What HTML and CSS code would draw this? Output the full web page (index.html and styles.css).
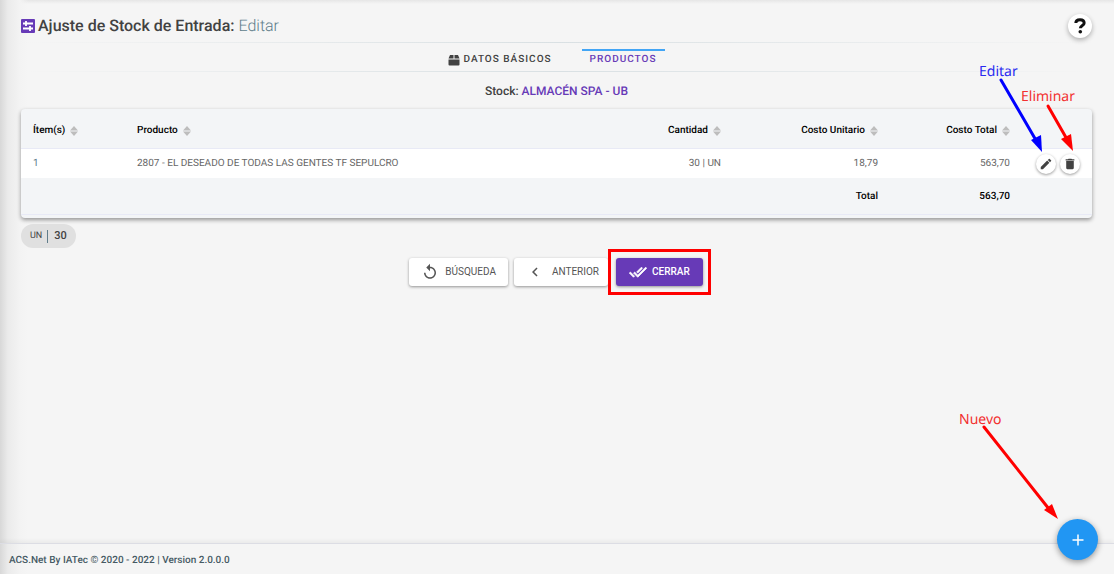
FILE: index.html
```html
<!DOCTYPE html>
<html lang="es">
<head>
<meta charset="utf-8">
<meta name="viewport" content="width=device-width, initial-scale=1">
<title>Ajuste de Stock de Entrada</title>
<link rel="stylesheet" href="styles.css">
</head>
<body>
<svg class="symbols" aria-hidden="true">
  <symbol id="sort" viewBox="0 0 8 10"><path d="M4 0 8 4.500H0zM4 10 0 5.500H8z"/></symbol>
</svg>
<main class="page">
  <header class="top">
    <h1 class="title">
      <svg class="title-icon" viewBox="0 0 14 14" aria-hidden="true"><rect width="14" height="14" rx="1" fill="#673ab7"/><path d="M2 4.500H12M2 9.500H12M5 2V7M9 7V12" stroke="#fff" stroke-width="1.800"/></svg>
      <span>Ajuste de Stock de Entrada: <span class="mode">Editar</span></span>
    </h1>
    <button class="help" aria-label="Ayuda"><svg viewBox="0 0 12 16" aria-hidden="true"><path d="M1.800 5C1.800 2.900 3.500 1.700 6 1.700S10.200 3 10.200 5C10.200 7.500 6.300 7.400 6.300 10.300" fill="none" stroke="#111" stroke-width="2.900"/><circle cx="6.300" cy="13.700" r="1.800" fill="#111"/></svg></button>
  </header>
  <nav class="tabs">
    <a class="tab" href="#datos"><svg class="box" viewBox="0 0 12 12" aria-hidden="true"><path d="M2 1H5.500V4.500H.5zM6.500 1H10L11.500 4.500H6.500zM.5 5.500H11.500V10.500Q11.500 11.500 10.500 11.500H1.500Q.5 11.500 .5 10.500z" fill="#424242"/></svg>DATOS BÁSICOS</a>
    <a class="tab active" href="#productos" aria-current="page">PRODUCTOS</a>
  </nav>
  <p class="stock">Stock: <strong>ALMACÉN SPA - UB</strong></p>
  <div class="card">
    <table class="grid">
      <colgroup><col class="c-item"><col><col class="c-qty"><col class="c-unit"><col class="c-total"><col class="c-act"></colgroup>
      <thead>
        <tr>
          <th>Ítem(s)<svg class="sort"><use href="#sort"/></svg></th>
          <th>Producto<svg class="sort"><use href="#sort"/></svg></th>
          <th class="num">Cantidad<svg class="sort"><use href="#sort"/></svg></th>
          <th class="num">Costo Unitario<svg class="sort"><use href="#sort"/></svg></th>
          <th class="num">Costo Total<svg class="sort"><use href="#sort"/></svg></th>
          <th></th>
        </tr>
      </thead>
      <tbody>
        <tr>
          <td class="item">1</td>
          <td>2807 - EL DESEADO DE TODAS LAS GENTES TF SEPULCRO</td>
          <td class="num">30 | UN</td>
          <td class="num">18,79</td>
          <td class="num">563,70</td>
          <td class="act"><div class="actions">
            <button class="round" aria-label="Editar"><svg viewBox="0 0 24 24" aria-hidden="true"><path d="M3 17.250V21h3.750L17.810 9.940l-3.750-3.750L3 17.250zM20.710 7.040a1 1 0 0 0 0-1.410l-2.340-2.340a1 1 0 0 0-1.410 0l-1.830 1.830 3.750 3.750 1.830-1.830z"/></svg></button>
            <button class="round" aria-label="Eliminar"><svg viewBox="0 0 24 24" aria-hidden="true"><path d="M5.500 19c0 1.100.9 2 2 2h9c1.100 0 2-.9 2-2V7h-13v12zM19.500 4h-4l-1-1h-5l-1 1h-4v2h15V4z"/></svg></button>
          </div></td>
        </tr>
      </tbody>
      <tfoot>
        <tr><td></td><td></td><td></td><td class="num">Total</td><td class="num">563,70</td><td></td></tr>
      </tfoot>
    </table>
  </div>
  <div class="chip"><span class="unit">UN</span><strong>30</strong></div>
  <div class="buttons">
    <button class="btn search"><svg viewBox="0 0 24 24" aria-hidden="true"><path d="M12 5V1L7 6l5 5V7c3.310 0 6 2.690 6 6s-2.690 6-6 6-6-2.690-6-6H4c0 4.420 3.580 8 8 8s8-3.580 8-8-3.580-8-8-8z"/></svg>BÚSQUEDA</button>
    <button class="btn prev"><svg viewBox="0 0 24 24" aria-hidden="true"><path d="M15.410 7.410 14 6l-6 6 6 6 1.410-1.410L10.830 12z"/></svg>ANTERIOR</button>
    <div class="marked"><button class="btn primary"><svg viewBox="0 0 24 24" aria-hidden="true"><path stroke="#fff" d="m18 7-1.410-1.410-6.340 6.340 1.410 1.410L18 7zm4.240-1.410L11.660 16.170 7.480 12l-1.410 1.410L11.660 19l12-12-1.420-1.410zM.41 13.410 6 19l1.410-1.410L1.830 12 .41 13.410z"/></svg>CERRAR</button></div>
  </div>
</main>
<footer class="footer">ACS.Net By IATec © 2020 - 2022 | Version 2.0.0.0</footer>
<button class="fab" aria-label="Nuevo"><svg viewBox="0 0 12 12" aria-hidden="true"><path d="M6 .5V11.500M.5 6H11.500" stroke="#fff" stroke-width="1.500"/></svg></button>
<svg class="notes notes-top" viewBox="0 0 174 230">
  <text x="39" y="76" fill="#2a2af0">Editar</text>
  <text x="81" y="101" fill="#f23030">Eliminar</text>
  <path d="M61 80 97 142" stroke="#00f" stroke-width="3" stroke-linecap="round"/><path d="M102 152 91 140 101 135z" fill="#00f"/>
  <path d="M108 106 128 141" stroke="red" stroke-width="3" stroke-linecap="round"/><path d="M133 151 121 139 131 134z" fill="red"/>
</svg>
<svg class="notes notes-bottom" viewBox="0 0 174 174">
  <text x="19" y="24" fill="#f23030">Nuevo</text>
  <path d="M44 27 109 109" stroke="red" stroke-width="3" stroke-linecap="round"/><path d="M118 119 104 110 112 104z" fill="red"/>
</svg>
</body>
</html>
```
FILE: styles.css
```css
* { box-sizing: border-box; }
body {
  margin: 0;
  min-height: 100vh;
  position: relative;
  display: flex;
  flex-direction: column;
  font-family: Roboto, "Liberation Sans", sans-serif;
  font-size: 10px;
  line-height: 16px;
  text-rendering: geometricPrecision;
  color: #424242;
  background: linear-gradient(90deg, #d8d8d8 0, #ebebeb 8px, #f3f3f3 20px, transparent 28px), linear-gradient(#e6e6e6 0, #f5f5f5 4px);
}
button { font: inherit; border: 0; padding: 0; cursor: pointer; }
.symbols { position: absolute; width: 0; height: 0; }
.page { flex: 1; padding: 0 22px 0 21px; }
.top {
  display: flex;
  justify-content: space-between;
  align-items: center;
  height: 42px;
  padding-top: 9px;
}
.title {
  display: flex;
  align-items: center;
  gap: 3px;
  margin: 0;
  font-size: 16px;
  line-height: 20px;
  font-weight: 500;
}
.title-icon { width: 14px; height: 14px; }
.mode { font-weight: 300; color: #607d8b; }
.help {
  width: 24px;
  height: 24px;
  display: grid;
  place-items: center;
  border-radius: 50%;
  background: #fff;
  box-shadow: 0 2px 5px rgba(0, 0, 0, .3);
}
.help svg { width: 12px; height: 16px; }
.tabs {
  display: flex;
  justify-content: center;
  gap: 22px;
  height: 30px;
  padding: 6px 8px 0 0;
  border: solid transparent;
  border-width: 1px 0;
  border-image: linear-gradient(90deg, transparent, #d9e0e3 50%, transparent) 1;
}
.tab {
  display: flex;
  align-items: center;
  gap: 3px;
  height: 20px;
  padding: 0 8px;
  border-top: 2px solid transparent;
  color: #424242;
  font-weight: 500;
  letter-spacing: 1px;
  text-decoration: none;
}
.tab.active { color: #673ab7; border-color: #42a5f5; }
.box { width: 12px; height: 12px; }
.stock { margin: 11px 0 10px; text-align: center; font-size: 12px; font-weight: 500; }
.stock strong { font-weight: 500; color: #673ab7; }
.card {
  padding-bottom: 3px;
  border-radius: 4px;
  background: #f3f5f7;
  box-shadow: 0 2px 4px rgba(0, 0, 0, .4);
}
.grid { width: 100%; table-layout: fixed; border-collapse: separate; border-spacing: 0; }
.c-item { width: 105px; }
.c-qty { width: 160px; }
.c-unit { width: 157px; }
.c-total { width: 132px; }
.c-act { width: 71px; }
.grid th, .grid td { padding: 0 11px; text-align: left; white-space: nowrap; }
.grid th:first-child, .grid td:first-child { padding-left: 12px; }
.grid .num { text-align: right; }
.grid th { height: 40px; padding-top: 4px; font-weight: 500; color: #000; border-bottom: 1px solid #e8eaf6; }
.grid tbody { background: #fff; color: #666; }
.grid tbody td { height: 29px; }
.grid tfoot td { height: 37px; padding-top: 2px; font-weight: 500; color: #000; border-bottom: 1px solid #e8eaf6; }
.grid .item { color: #607d8b; }
.grid .act { padding: 0 11px 0 15px; }
.sort { width: 8px; height: 10px; margin-left: 5px; fill: #bdbdbd; vertical-align: -3px; }
.actions { display: flex; gap: 4px; }
.round {
  width: 20px;
  height: 20px;
  display: grid;
  place-items: center;
  border-radius: 50%;
  background: #fff;
  box-shadow: 0 1px 3px rgba(0, 0, 0, .4);
}
.round svg { width: 14px; height: 14px; fill: #424242; }
.chip {
  display: flex;
  align-items: center;
  width: fit-content;
  height: 24px;
  margin-top: 6px;
  padding: 0 9px;
  border-radius: 12px;
  background: #e0e0e0;
}
.unit { margin-right: 6px; padding-right: 5px; line-height: 13px; font-size: 9px; border-right: 1px solid #607d8b; }
.chip strong { font-size: 11px; font-weight: 500; }
.buttons { display: flex; justify-content: center; align-items: center; margin-top: 1px; padding-left: 7px; }
.btn {
  display: flex;
  align-items: center;
  height: 28px;
  border-radius: 3px;
  background: #fff;
  color: #555;
  box-shadow: 0 1px 3px rgba(0, 0, 0, .4);
}
.btn svg { fill: currentColor; }
.search { gap: 6px; padding: 0 12px; margin-right: 6px; }
.search svg { width: 18px; height: 18px; }
.prev { gap: 8px; padding: 0 9px 0 12px; }
.prev svg { width: 18px; height: 18px; }
.marked { padding: 6px 5px; border: 3px solid #f00; background: #f5f5f5; position: relative; }
.primary { gap: 5px; padding: 0 13px; background: #673ab7; color: #fff; font-weight: 500; }
.primary svg { width: 18px; height: 18px; }
.footer {
  height: 31px;
  padding: 9px 9px 0;
  border-top: 1px solid #dcdde4;
  box-shadow: 0 -2px 4px rgba(0, 0, 0, .05);
  color: #455a64;
  font-weight: 500;
}
.fab {
  position: absolute;
  right: 16px;
  bottom: 14px;
  width: 41px;
  height: 41px;
  display: grid;
  place-items: center;
  border-radius: 50%;
  background: #2196f3;
  box-shadow: 0 2px 6px rgba(0, 0, 0, .4);
}
.fab svg { width: 12px; height: 12px; }
.notes { position: absolute; right: 0; width: 174px; pointer-events: none; font: 14px/20px "Noto Sans", sans-serif; }
.notes-top { top: 0; height: 230px; }
.notes-bottom { bottom: 0; height: 174px; }
```
